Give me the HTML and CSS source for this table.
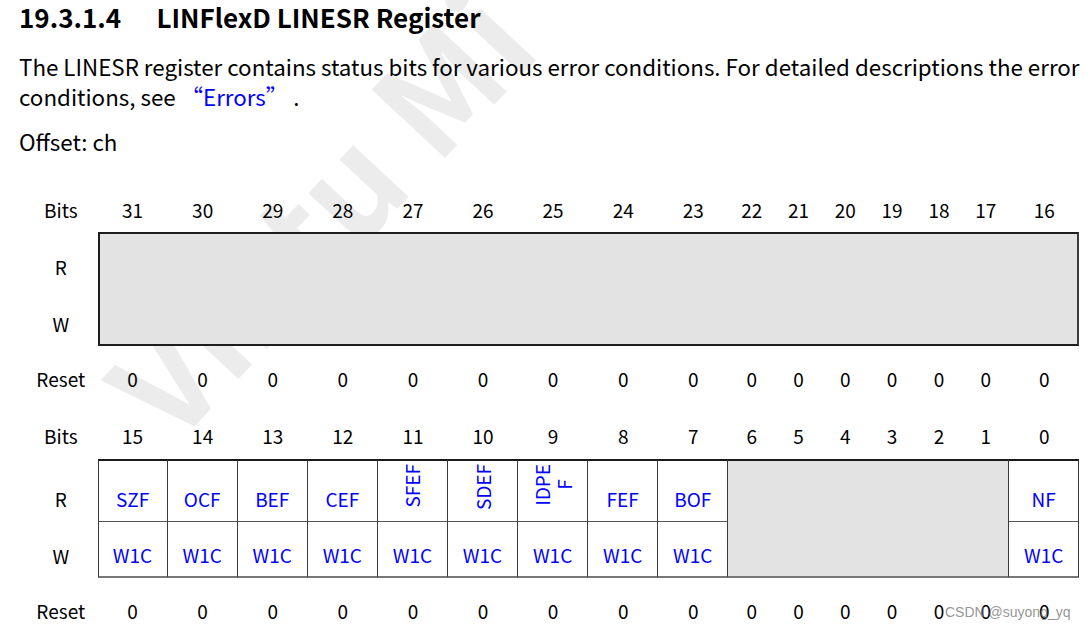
FILE: index.html
```html
<!DOCTYPE html>
<html lang="en">
<head>
<meta charset="utf-8">
<title>LINFlexD LINESR Register</title>
<link rel="stylesheet" href="styles.css">
</head>
<body>
<div class="page">
  <div class="watermark">Vintu Mi</div>

  <h2 class="title"><span class="secnum">19.3.1.4</span>LINFlexD LINESR Register</h2>
  <p class="desc">The LINESR register contains status bits for various error conditions. For detailed descriptions the error<br>conditions, see <a class="xref">“Errors”</a> .</p>
  <p class="offset">Offset: ch</p>

  <div class="reg reg-hi">
    <div class="lbl rb">Bits</div>
    <div class="num rb">31</div><div class="num rb">30</div><div class="num rb">29</div><div class="num rb">28</div>
    <div class="num rb">27</div><div class="num rb">26</div><div class="num rb">25</div><div class="num rb">24</div>
    <div class="num rb">23</div><div class="num rb">22</div><div class="num rb">21</div><div class="num rb">20</div>
    <div class="num rb">19</div><div class="num rb">18</div><div class="num rb">17</div><div class="num rb">16</div>

    <div class="lbl rr">R</div>
    <div class="box"></div>
    <div class="lbl rw">W</div>

    <div class="lbl rz">Reset</div>
    <div class="num rz">0</div><div class="num rz">0</div><div class="num rz">0</div><div class="num rz">0</div>
    <div class="num rz">0</div><div class="num rz">0</div><div class="num rz">0</div><div class="num rz">0</div>
    <div class="num rz">0</div><div class="num rz">0</div><div class="num rz">0</div><div class="num rz">0</div>
    <div class="num rz">0</div><div class="num rz">0</div><div class="num rz">0</div><div class="num rz">0</div>
  </div>

  <div class="reg reg-lo">
    <div class="lbl rb">Bits</div>
    <div class="num rb">15</div><div class="num rb">14</div><div class="num rb">13</div><div class="num rb">12</div>
    <div class="num rb">11</div><div class="num rb">10</div><div class="num rb">9</div><div class="num rb">8</div>
    <div class="num rb">7</div><div class="num rb">6</div><div class="num rb">5</div><div class="num rb">4</div>
    <div class="num rb">3</div><div class="num rb">2</div><div class="num rb">1</div><div class="num rb">0</div>

    <div class="lbl rr">R</div>
    <div class="cell rr first"><span>SZF</span></div>
    <div class="cell rr"><span>OCF</span></div>
    <div class="cell rr"><span>BEF</span></div>
    <div class="cell rr"><span>CEF</span></div>
    <div class="cell rr vert"><span class="vtext">SFEF</span></div>
    <div class="cell rr vert"><span class="vtext">SDEF</span></div>
    <div class="cell rr vert"><span class="vtext">IDPE<br>F</span></div>
    <div class="cell rr"><span>FEF</span></div>
    <div class="cell rr"><span>BOF</span></div>
    <div class="rsvd"></div>
    <div class="cell rr"><span>NF</span></div>

    <div class="lbl rw">W</div>
    <div class="cell rw first"><span>W1C</span></div>
    <div class="cell rw"><span>W1C</span></div>
    <div class="cell rw"><span>W1C</span></div>
    <div class="cell rw"><span>W1C</span></div>
    <div class="cell rw"><span>W1C</span></div>
    <div class="cell rw"><span>W1C</span></div>
    <div class="cell rw"><span>W1C</span></div>
    <div class="cell rw"><span>W1C</span></div>
    <div class="cell rw"><span>W1C</span></div>
    <div class="cell rw"><span>W1C</span></div>

    <div class="lbl rz">Reset</div>
    <div class="num rz">0</div><div class="num rz">0</div><div class="num rz">0</div><div class="num rz">0</div>
    <div class="num rz">0</div><div class="num rz">0</div><div class="num rz">0</div><div class="num rz">0</div>
    <div class="num rz">0</div><div class="num rz">0</div><div class="num rz">0</div><div class="num rz">0</div>
    <div class="num rz">0</div><div class="num rz">0</div><div class="num rz">0</div><div class="num rz">0</div>
  </div>

  <div class="csdn">CSDN @suyong_yq</div>
</div>
</body>
</html>
```

FILE: styles.css
```css
* { box-sizing: border-box; }

html, body {
  margin: 0;
  padding: 0;
  background: #ffffff;
}

.page {
  position: relative;
  width: 1088px;
  height: 631px;
  overflow: hidden;
  padding: 2px 0 0 19px;
  font-family: "Noto Sans CJK SC", "Noto Sans", sans-serif;
  color: #000;
}

.page > * {
  position: relative;
  z-index: 1;
}

.watermark {
  position: absolute;
  z-index: 0;
  left: 82px;
  top: 362px;
  font-size: 135px;
  font-weight: 700;
  line-height: 135px;
  color: #ececec;
  white-space: nowrap;
  transform: rotate(-47deg);
  transform-origin: 0 0;
}

.title {
  margin: 0;
  font-size: 26px;
  font-weight: 700;
  line-height: 30px;
  white-space: nowrap;
}

.secnum {
  display: inline-block;
  width: 137.5px;
}

.desc {
  margin: 19px 0 0 0;
  font-size: 22.35px;
  line-height: 30px;
  white-space: nowrap;
}

.xref {
  color: #0000ff;
}

.offset {
  margin: 15px 0 0 0;
  font-size: 22.35px;
  line-height: 30px;
}

.reg {
  display: grid;
  grid-template-columns: 73.5px repeat(9, 70.1px) repeat(6, 46.8px) 70.1px;
  margin-left: 5px;
  font-size: 19px;
  line-height: 22px;
}

.reg-hi {
  margin-top: 32px;
  grid-template-rows: 44px 57px 57px 66px;
}

.reg-lo {
  grid-template-rows: 47px 63px 56px 66px;
}

.rb { grid-row: 1; }
.rr { grid-row: 2; }
.rw { grid-row: 3; }
.rz { grid-row: 4; }

.lbl, .num, .cell {
  display: flex;
  align-items: center;
  justify-content: center;
  position: relative;
  z-index: 2;
}

.lbl { grid-column: 1; }

.reg-hi .lbl.rr, .reg-hi .lbl.rw { padding-top: 12px; }
.reg-lo .lbl.rr { padding-top: 16px; }
.reg-lo .lbl.rw { padding-top: 11px; }

.box {
  grid-column: 2 / -1;
  grid-row: 2 / 4;
  background: #e3e3e3;
  border: 2px solid #1e1e1e;
  border-right-color: #3c3c3c;
}

.cell {
  color: #0000ff;
  border-right: 1.5px solid #3a3a3a;
}

.cell.rr {
  border-top: 2px solid #1a1a1a;
  border-bottom: 1px solid #555;
  padding-top: 16px;
}

.cell.rw {
  border-bottom: 2px solid #777;
  padding-top: 11px;
}

.cell.first {
  border-left: 1.5px solid #3a3a3a;
}

.cell.vert {
  align-items: flex-start;
  padding-top: 3px;
}

.vtext {
  writing-mode: vertical-rl;
  transform: rotate(180deg);
  text-align: center;
  line-height: 22px;
}

.rsvd {
  grid-column: 11 / 17;
  grid-row: 2 / 4;
  background: #e3e3e3;
  border-top: 2px solid #1a1a1a;
  border-bottom: 2px solid #777;
  border-right: 1.5px solid #3a3a3a;
}

.csdn {
  position: absolute;
  z-index: 5;
  left: 945px;
  top: 604px;
  font-family: "Liberation Sans", Arial, sans-serif;
  font-size: 14px;
  line-height: 17px;
  color: rgba(120, 120, 120, 0.8);
  white-space: nowrap;
}
```
